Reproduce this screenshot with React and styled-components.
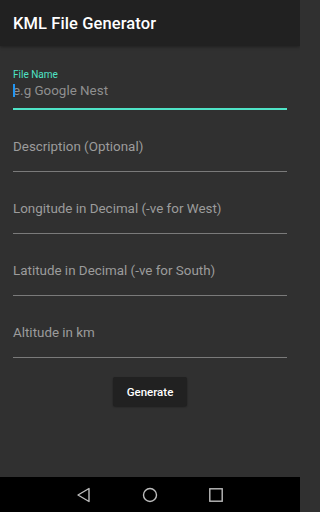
import React from "react";
import styled, { createGlobalStyle } from "styled-components";

const GlobalStyle = createGlobalStyle`
  html, body {
    margin: 0;
    padding: 0;
    background: #303030;
  }
  body {
    font-family: Roboto, "Noto Sans", "Liberation Sans", sans-serif;
    -webkit-font-smoothing: antialiased;
  }
`;

const ACCENT = "#4fe3c6";

const Screen = styled.div`
  width: 300px;
  height: 512px;
  display: flex;
  flex-direction: column;
  overflow: hidden;
  background: #303030;
`;

const AppBar = styled.header`
  height: 46px;
  flex-shrink: 0;
  display: flex;
  align-items: center;
  padding: 0 13px;
  background: #212121;
  box-shadow: 0 1px 3px rgba(0, 0, 0, 0.35);
  z-index: 1;
`;

const Title = styled.h1`
  margin: 0;
  font-size: 16.5px;
  font-weight: 500;
  color: #ffffff;
  letter-spacing: 0.1px;
`;

const Content = styled.main`
  flex: 1;
  display: flex;
  flex-direction: column;
  padding: 2px 13px 0;
`;

const Field = styled.div`
  height: 62px;
  display: flex;
  flex-direction: column;
  justify-content: flex-end;
`;

const Label = styled.span`
  font-size: 10px;
  line-height: 12px;
  color: ${ACCENT};
  margin-bottom: 2px;
`;

const InputRow = styled.div`
  position: relative;
  font-size: 13.4px;
  line-height: 16px;
  color: ${(p) => (p.$focused ? "#8f8f8f" : "#9c9c9c")};
  margin-bottom: ${(p) => (p.$focused ? "9px" : "16px")};
  white-space: nowrap;
`;

const Caret = styled.span`
  position: absolute;
  left: 0;
  top: 1px;
  width: 2px;
  height: 13px;
  background: #2196f3;
`;

const Underline = styled.div`
  height: ${(p) => (p.$focused ? "2px" : "1px")};
  background: ${(p) => (p.$focused ? ACCENT : "#7a7a7a")};
`;

const ButtonRow = styled.div`
  display: flex;
  justify-content: center;
  margin-top: 19px;
`;

const Button = styled.button`
  width: 74px;
  height: 29px;
  border: none;
  border-radius: 2px;
  background: #212121;
  color: #ffffff;
  font-family: inherit;
  font-size: 11.5px;
  font-weight: 500;
  box-shadow: 0 1px 2px rgba(0, 0, 0, 0.4);
  cursor: pointer;
`;

const NavBar = styled.nav`
  height: 35px;
  flex-shrink: 0;
  background: #000000;
  display: flex;
  justify-content: center;
  align-items: center;
  gap: 46px;
`;

const NavIcon = styled.svg`
  width: 20px;
  height: 20px;
  display: block;
`;

const fields = [
  { hint: "Description (Optional)" },
  { hint: "Longitude in Decimal (-ve for West)" },
  { hint: "Latitude in Decimal (-ve for South)" },
  { hint: "Altitude in km" },
];

export default function App() {
  return (
    <>
      <GlobalStyle />
      <Screen>
        <AppBar>
          <Title>KML File Generator</Title>
        </AppBar>
        <Content>
          <Field>
            <Label>File Name</Label>
            <InputRow $focused>
              e.g Google Nest
              <Caret />
            </InputRow>
            <Underline $focused />
          </Field>
          {fields.map((f) => (
            <Field key={f.hint}>
              <InputRow>{f.hint}</InputRow>
              <Underline />
            </Field>
          ))}
          <ButtonRow>
            <Button>Generate</Button>
          </ButtonRow>
        </Content>
        <NavBar>
          <NavIcon viewBox="0 0 20 20">
            <path d="M15 3.5 L15 16.5 L4 10 Z" fill="none" stroke="#bdbdbd" strokeWidth="1.4" strokeLinejoin="round" />
          </NavIcon>
          <NavIcon viewBox="0 0 20 20">
            <circle cx="10" cy="10" r="6.5" fill="none" stroke="#bdbdbd" strokeWidth="1.4" />
          </NavIcon>
          <NavIcon viewBox="0 0 20 20">
            <rect x="3.8" y="3.8" width="12.4" height="12.4" fill="none" stroke="#bdbdbd" strokeWidth="1.4" />
          </NavIcon>
        </NavBar>
      </Screen>
    </>
  );
}
